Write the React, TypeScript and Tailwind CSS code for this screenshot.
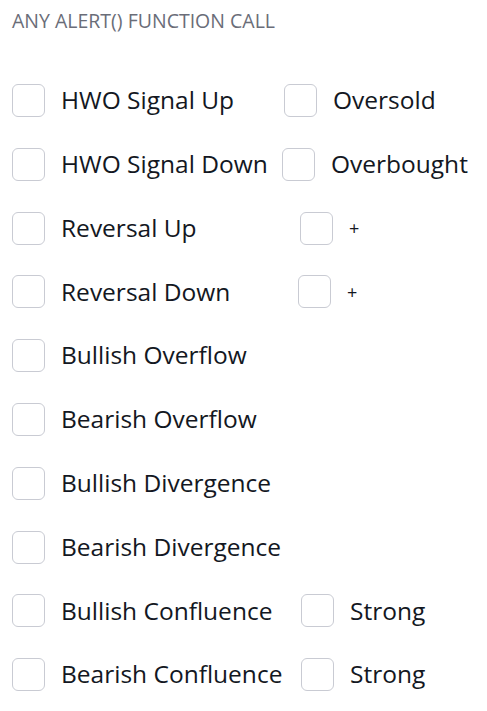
import React from 'react'

type Row = { label: string; width?: number; extra?: string }

const rows: Row[] = [
  { label: 'HWO Signal Up', width: 223, extra: 'Oversold' },
  { label: 'HWO Signal Down', width: 221, extra: 'Overbought' },
  { label: 'Reversal Up', width: 239, extra: '+' },
  { label: 'Reversal Down', width: 237, extra: '+' },
  { label: 'Bullish Overflow' },
  { label: 'Bearish Overflow' },
  { label: 'Bullish Divergence' },
  { label: 'Bearish Divergence' },
  { label: 'Bullish Confluence', width: 240, extra: 'Strong' },
  { label: 'Bearish Confluence', width: 240, extra: 'Strong' },
]

const Box = () => (
  <span className="block h-[33px] w-[33px] shrink-0 rounded-[6px] border border-[#c9cbd3] bg-white" />
)

export default function App() {
  return (
    <div
      className="h-[711px] w-[487px] bg-white pl-3 text-[#131722]"
      style={{ fontFamily: '"Open Sans", "DejaVu Sans", sans-serif' }}
    >
      <div className="pt-[8px] text-[19.5px] leading-[26px] text-[#6a6d78]">ANY ALERT() FUNCTION CALL</div>
      <div className="mt-[50px] flex flex-col gap-[30.8px]">
        {rows.map((r) => (
          <div key={r.label} className="flex h-[33px] items-center">
            <Box />
            <span
              className="ml-4 shrink-0 text-[24.5px] leading-none"
              style={r.width ? { width: r.width } : undefined}
            >
              {r.label}
            </span>
            {r.extra && (
              <>
                <Box />
                <span className={r.extra === '+' ? 'ml-4 text-[18px] leading-none' : 'ml-4 text-[24.5px] leading-none'}>
                  {r.extra}
                </span>
              </>
            )}
          </div>
        ))}
      </div>
    </div>
  )
}
